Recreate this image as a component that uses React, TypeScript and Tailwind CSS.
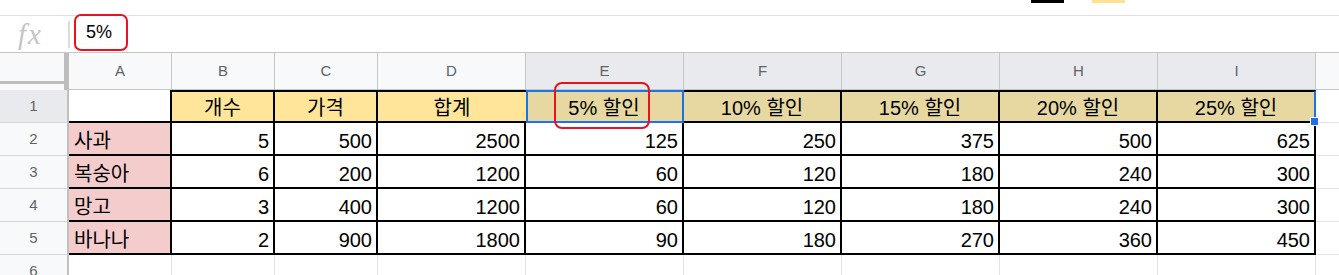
import clsx from "clsx";

const LETTERS = ["A", "B", "C", "D", "E", "F", "G", "H", "I"];
const HEADINGS = ["개수", "가격", "합계", "5% 할인", "10% 할인", "15% 할인", "20% 할인", "25% 할인"];

const ROWS: [string, ...number[]][] = [
    ["사과", 5, 500, 2500, 125, 250, 375, 500, 625],
    ["복숭아", 6, 200, 1200, 60, 120, 180, 240, 300],
    ["망고", 3, 400, 1200, 60, 120, 180, 240, 300],
    ["바나나", 2, 900, 1800, 90, 180, 270, 360, 450],
];

const GRID = "grid grid-cols-[69px_103px_103px_103px_148px_158px_158px_158px_158px_158px_23px]";

function RowHead({n, selected}: {n: number; selected?: boolean}) {
    return (
        <div
            className={clsx(
                "flex h-[33px] items-center justify-center border-r-2 border-b border-r-[#c0c0c0] border-b-[#d4d6d8] text-[15px] text-[#5f6368]",
                selected ? "bg-[#e8eaed]" : "bg-[#f8f9fa]",
            )}
        >
            {n}
        </div>
    );
}

export default function App() {
    return (
        <div className="h-[275px] w-[1339px] overflow-hidden bg-white font-[family-name:'Liberation_Sans','Noto_Sans_CJK_KR',sans-serif] text-black">
            {/* toolbar remnant */}
            <div className="flex h-[16px] gap-[28px] border-b border-[#e0e0e0] pl-[1031px]">
                <div className="h-[3px] w-[33px] bg-black"/>
                <div className="h-[3px] w-[33px] bg-[#fde293]"/>
            </div>

            {/* formula bar */}
            <div className="flex h-[36px] items-center">
                <span className="w-[68px] shrink-0 pl-[18px] font-['Liberation_Serif',serif] text-[29px] italic leading-none tracking-[2px] text-[#c4c4c4]">fx</span>
                <div className="h-[27px] w-[2px] shrink-0 bg-[#dadce0]"/>
                <div className="-mt-[3px] ml-[4px] flex h-[37px] w-[54px] shrink-0 items-center rounded-[7px] border-2 border-[#e8141b] pl-[10px] text-[18px]">
                    5%
                </div>
            </div>

            {/* column headers */}
            <div className={clsx(GRID, "border-t border-[#c4c7c5]")}>
                <div className="h-[37px] border-r-[5px] border-[#bdbdbd] bg-[#f8f9fa]">
                    <div className="h-[31px] border-b-[3px] border-[#bdbdbd]"/>
                </div>
                {LETTERS.map((l, i) => (
                    <div
                        key={l}
                        className={clsx(
                            "flex h-[37px] items-center justify-center border-r border-b border-[#c4c7c5] text-[15px] text-[#5f6368]",
                            i >= 4 ? "bg-[#e8eaed]" : "bg-[#f8f9fa]",
                        )}
                    >
                        {l}
                    </div>
                ))}
                <div className="h-[37px] border-b border-[#c4c7c5] bg-[#f8f9fa]"/>
            </div>

            {/* row 1 */}
            <div className={GRID}>
                <RowHead n={1} selected/>
                <div className="h-[33px] border-r-2 border-b-2 border-black"/>
                {HEADINGS.map((h, i) => {
                    const sel = i >= 3;
                    return (
                        <div
                            key={h}
                            className={clsx(
                                "relative flex h-[33px] items-end justify-center border-t-2 border-b-2 border-black pb-[2px] text-[20px] leading-[22px]",
                                sel ? "bg-[#e7d8a1]" : "bg-[#ffe599]",
                                i === 2 ? "border-r-0" : "border-r-2",
                                i === 7 && "border-r-[#1a73e8]",
                            )}
                        >
                            {h}
                            {i === 3 && (
                                <>
                                    <div className="absolute top-[-2px] right-[-2px] bottom-[-2px] left-0 border-2 border-[#1a73e8]"/>
                                    <div className="absolute top-[-10px] left-[28px] h-[47px] w-[96px] rounded-[8px] border-2 border-[#e8141b]"/>
                                </>
                            )}
                            {i === 7 && (
                                <div className="absolute right-[-5px] bottom-[-5px] h-[9px] w-[9px] border border-white bg-[#1a73e8]"/>
                            )}
                        </div>
                    );
                })}
                <div className="h-[33px] border-b border-[#e2e3e3]"/>
            </div>

            {/* rows 2-5 */}
            {ROWS.map(([name, ...nums], r) => (
                <div key={name} className={GRID}>
                    <RowHead n={r + 2}/>
                    <div className="flex h-[33px] items-end border-r-2 border-b-2 border-black bg-[#f4cccc] pb-[2px] pl-[5px] text-[20px] leading-[22px]">
                        {name}
                    </div>
                    {nums.map((v, i) => (
                        <div
                            key={i}
                            className="flex h-[33px] items-end justify-end border-r-2 border-b-2 border-black pr-[4px] pb-[2px] text-[20px] leading-[22px]"
                        >
                            {v}
                        </div>
                    ))}
                    <div className="h-[33px] border-b border-[#e2e3e3]"/>
                </div>
            ))}

            {/* row 6 */}
            <div className={GRID}>
                <RowHead n={6}/>
                {LETTERS.map((l) => (
                    <div key={l} className="h-[33px] border-r border-b border-[#e2e3e3]"/>
                ))}
                <div className="h-[33px] border-b border-[#e2e3e3]"/>
            </div>
        </div>
    );
}
